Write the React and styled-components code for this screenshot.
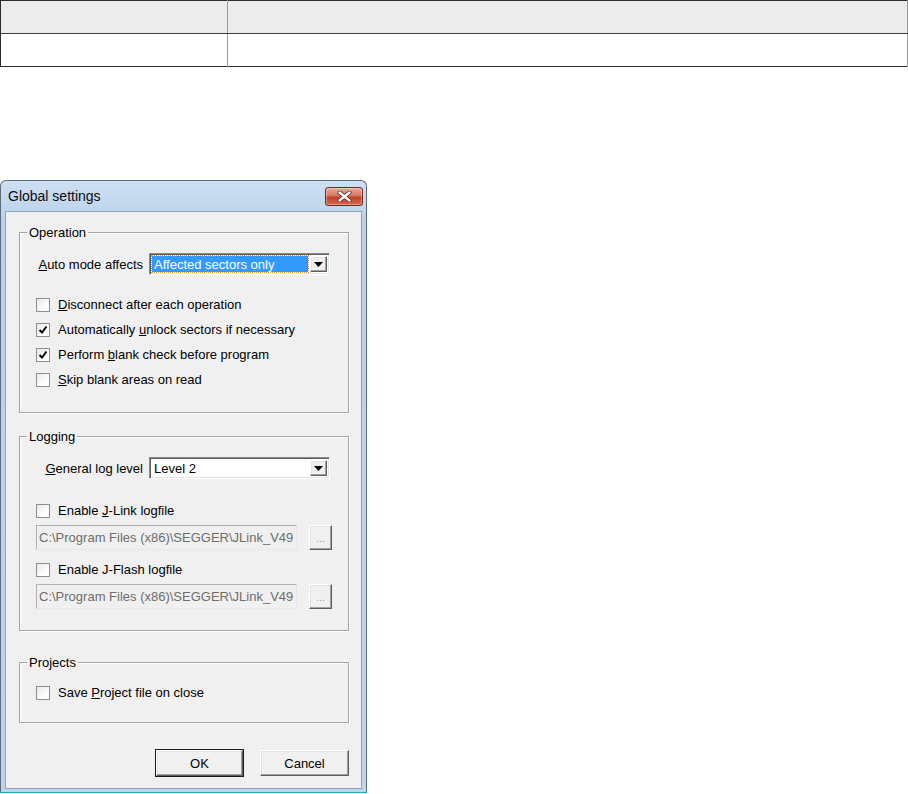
import styled, { createGlobalStyle, css } from 'styled-components'

const GlobalStyle = createGlobalStyle`
  body {
    margin: 0;
    background: #ffffff;
    font-family: "Liberation Sans", Arial, sans-serif;
  }
`

const Page = styled.div`
  display: flex;
  flex-direction: column;
  width: 908px;
`

const Table = styled.table`
  width: 908px;
  border-collapse: collapse;
  border: 1px solid #2b2b2b;
`

const HeadCell = styled.th`
  height: 32px;
  padding: 0;
  background: #ececec;
  border-bottom: 1px solid #3c3c3c;
  border-right: 1px solid #9a9a9a;
  width: ${p => p.$w || 'auto'};
`

const BodyCell = styled.td`
  height: 32px;
  padding: 0;
  border-right: 1px solid #9a9a9a;
  width: ${p => p.$w || 'auto'};
`

const Dialog = styled.div`
  margin-top: 113px;
  width: 367px;
  height: 613px;
  box-sizing: border-box;
  display: flex;
  flex-direction: column;
  border: 1px solid #5b6b80;
  border-bottom-color: #2aa5c4;
  border-radius: 6px 6px 0 0;
  background: linear-gradient(#cddff3, #bcd2ea 40px, #bfd4ec);
  padding: 0 4px 3px;
`

const TitleBar = styled.div`
  height: 30px;
  display: flex;
  align-items: center;
  justify-content: space-between;
  padding: 0 0 0 3px;
`

const Title = styled.span`
  font-size: 14px;
  color: #0b0b0b;
`

const CloseButton = styled.div`
  width: 38px;
  height: 19px;
  margin-right: -1px;
  box-sizing: border-box;
  border: 1px solid #74281c;
  border-radius: 3px;
  background: linear-gradient(#e9a99a, #d77760 45%, #c2432a 55%, #d0684f);
  box-shadow: inset 0 0 0 1px rgba(255, 255, 255, 0.35);
  display: flex;
  align-items: center;
  justify-content: center;
`

const Client = styled.div`
  flex: 1;
  background: #f0f0f0;
  border: 1px solid #8ea4bd;
  display: flex;
  flex-direction: column;
  padding: 13px 12px 0 13px;
`

const Group = styled.fieldset`
  margin: ${p => p.$top || 0}px 0 0;
  padding: ${p => p.$pt}px 16px ${p => p.$pb}px 16px;
  border: 1px solid #a3a3a3;
  box-shadow: 1px 1px 0 #ffffff, inset 1px 1px 0 #ffffff;
  display: flex;
  flex-direction: column;
  min-width: 0;
`

const Legend = styled.legend`
  font-size: 13px;
  line-height: 15px;
  padding: 0 2px;
  margin-left: -9px;
  color: #000;
`

const ComboRow = styled.div`
  display: flex;
  align-items: center;
  gap: 6px;
  height: 22px;
`

const Label = styled.span`
  width: 107px;
  text-align: right;
  font-size: 13px;
  color: #000;
  white-space: nowrap;
`

const sunken = css`
  border: 1px solid;
  border-color: #8a8a8a #ffffff #ffffff #8a8a8a;
  box-shadow: inset 1px 1px 0 #5e5e5e, inset -1px -1px 0 #e3e3e3;
`

const raised = css`
  border: 1px solid;
  border-color: #ffffff #5e5e5e #5e5e5e #ffffff;
  box-shadow: inset -1px -1px 0 #a0a0a0, inset 1px 1px 0 #e3e3e3;
  background: #f0f0f0;
`

const Combo = styled.div`
  ${sunken};
  width: 181px;
  height: 22px;
  box-sizing: border-box;
  background: #ffffff;
  display: flex;
  align-items: stretch;
  padding: 2px;
`

const ComboText = styled.div`
  flex: 1;
  font-size: 13px;
  line-height: 17px;
  padding: 0 2px;
  margin-right: 2px;
  color: ${p => (p.$selected ? '#ffffff' : '#000000')};
  background: ${p => (p.$selected ? '#3399ff' : 'transparent')};
  outline: ${p => (p.$selected ? '1px dotted #d8a040' : 'none')};
  white-space: nowrap;
  overflow: hidden;
`

const DropButton = styled.div`
  ${raised};
  width: 17px;
  box-sizing: border-box;
  display: flex;
  align-items: center;
  justify-content: center;
`

const Checks = styled.div`
  display: flex;
  flex-direction: column;
  margin-top: ${p => p.$top || 0}px;
`

const CheckRow = styled.label`
  display: flex;
  align-items: center;
  gap: 8px;
  height: 25px;
  font-size: 13px;
  color: #000;
  margin-top: ${p => p.$top || 0}px;
`

const Box = styled.span`
  width: 14px;
  height: 14px;
  box-sizing: border-box;
  border: 1px solid #8f8f8f;
  background: linear-gradient(135deg, #e8e8e8, #ffffff 70%);
  display: flex;
  align-items: center;
  justify-content: center;
`

const PathRow = styled.div`
  display: flex;
  align-items: center;
  gap: 12px;
  margin-top: ${p => p.$top || 0}px;
`

const PathField = styled.div`
  width: 261px;
  height: 25px;
  box-sizing: border-box;
  border: 1px solid;
  border-color: #b0b0b0 #e8e8e8 #e8e8e8 #b0b0b0;
  background: #f0f0f0;
  font-size: 13px;
  line-height: 23px;
  padding-left: 2px;
  color: #6d6d6d;
  white-space: nowrap;
  overflow: hidden;
`

const BrowseButton = styled.div`
  ${raised};
  width: 23px;
  height: 25px;
  box-sizing: border-box;
  font-size: 11px;
  color: #a0a0a0;
  text-align: center;
  line-height: 24px;
`

const Buttons = styled.div`
  display: flex;
  justify-content: flex-end;
  gap: 17px;
  margin-top: 27px;
`

const Button = styled.div`
  ${raised};
  width: ${p => p.$w}px;
  height: 26px;
  box-sizing: border-box;
  font-size: 13px;
  display: flex;
  align-items: center;
  justify-content: center;
  color: #000;
  ${p => p.$default && css`
    outline: 1px solid #1a1a1a;
    outline-offset: 0;
  `}
`

const CloseIcon = () => (
  <svg width="15" height="11" viewBox="0 0 15 11">
    <path d="M2.5 1.5 L12.5 9.5 M12.5 1.5 L2.5 9.5" stroke="#5a2418" strokeWidth="4" strokeLinecap="round" />
    <path d="M2.5 1.5 L12.5 9.5 M12.5 1.5 L2.5 9.5" stroke="#ffffff" strokeWidth="2.4" strokeLinecap="round" />
  </svg>
)

const Arrow = () => (
  <svg width="9" height="5" viewBox="0 0 9 5">
    <path d="M0 0 H9 L4.5 5 Z" fill="#000" />
  </svg>
)

const Check = ({ checked }) => (
  <Box>
    {checked && (
      <svg width="10" height="10" viewBox="0 0 10 10">
        <path d="M1.5 5 L4 7.5 L8.5 1.5" stroke="#000" strokeWidth="1.9" fill="none" />
      </svg>
    )}
  </Box>
)

const CheckBox = ({ checked, top, children }) => (
  <CheckRow $top={top}>
    <Check checked={checked} />
    <span>{children}</span>
  </CheckRow>
)

const Select = ({ value, selected }) => (
  <Combo>
    <ComboText $selected={selected}>{value}</ComboText>
    <DropButton>
      <Arrow />
    </DropButton>
  </Combo>
)

const PATH = 'C:\\Program Files (x86)\\SEGGER\\JLink_V49'

const App = () => {
  return (
    <Page>
      <GlobalStyle />
      <Table>
        <thead>
          <tr>
            <HeadCell $w="226px" />
            <HeadCell />
          </tr>
        </thead>
        <tbody>
          <tr>
            <BodyCell $w="226px" />
            <BodyCell />
          </tr>
        </tbody>
      </Table>

      <Dialog>
        <TitleBar>
          <Title>Global settings</Title>
          <CloseButton>
            <CloseIcon />
          </CloseButton>
        </TitleBar>
        <Client>
          <Group $pt={13} $pb={20}>
            <Legend>Operation</Legend>
            <ComboRow>
              <Label><u>A</u>uto mode affects</Label>
              <Select value="Affected sectors only" selected />
            </ComboRow>
            <Checks $top={17}>
              <CheckBox><u>D</u>isconnect after each operation</CheckBox>
              <CheckBox checked>Automatically <u>u</u>nlock sectors if necessary</CheckBox>
              <CheckBox checked>Perform <u>b</u>lank check before program</CheckBox>
              <CheckBox><u>S</u>kip blank areas on read</CheckBox>
            </Checks>
          </Group>

          <Group $top={16} $pt={13} $pb={21}>
            <Legend>Logging</Legend>
            <ComboRow>
              <Label><u>G</u>eneral log level</Label>
              <Select value="Level 2" />
            </ComboRow>
            <CheckBox top={19}>Enable <u>J</u>-Link logfile</CheckBox>
            <PathRow $top={2}>
              <PathField>{PATH}</PathField>
              <BrowseButton>...</BrowseButton>
            </PathRow>
            <CheckBox top={7}>Enable J-Flash logfile</CheckBox>
            <PathRow $top={2}>
              <PathField>{PATH}</PathField>
              <BrowseButton>...</BrowseButton>
            </PathRow>
          </Group>

          <Group $top={24} $pt={10} $pb={17}>
            <Legend>Projects</Legend>
            <CheckBox>Save <u>P</u>roject file on close</CheckBox>
          </Group>

          <Buttons>
            <Button $w={87} $default>OK</Button>
            <Button $w={89}>Cancel</Button>
          </Buttons>
        </Client>
      </Dialog>
    </Page>
  )
}

export default App
